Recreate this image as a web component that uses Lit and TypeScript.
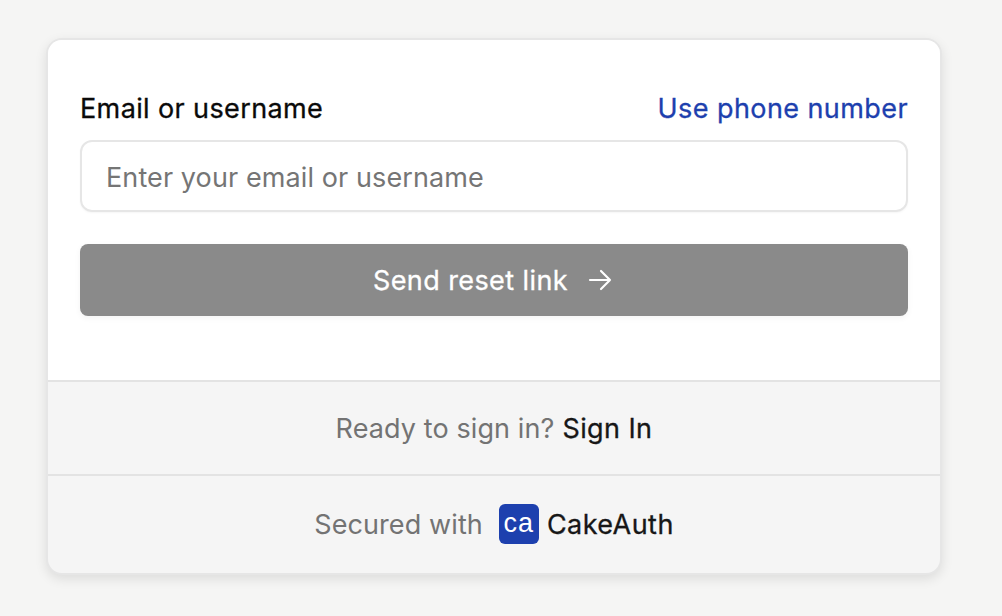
import { LitElement, html, css } from "lit";
import { customElement } from "lit/decorators.js";

@customElement("app-root")
export class AppRoot extends LitElement {
  static styles = css`
    :host {
      display: block;
      width: 1002px;
      height: 616px;
      box-sizing: border-box;
      background: #f5f5f4;
      padding: 38px 60px 0 46px;
      font-family: Inter, "Liberation Sans", sans-serif;
      font-size: 27px;
      letter-spacing: 0.1px;
      overflow: hidden;
    }
    .card {
      box-sizing: border-box;
      width: 896px;
      height: 537px;
      background: #f5f5f5;
      border: 2px solid #e6e6e6;
      border-radius: 16px;
      box-shadow: 0 4px 12px rgba(0, 0, 0, 0.1);
      display: flex;
      flex-direction: column;
      overflow: hidden;
    }
    .main {
      background: #fff;
      height: 340px;
      flex: none;
      box-sizing: border-box;
      padding: 50px 32px 0;
    }
    .head {
      display: flex;
      justify-content: space-between;
      align-items: center;
      height: 36px;
      padding-top: 2px;
      box-sizing: border-box;
      line-height: 36px;
      margin-bottom: 14px;
    }
    .label { color: #0a0a0a; letter-spacing: 0.38px; -webkit-text-stroke: 0.3px currentColor; }
    .alt { color: #1d40ae; letter-spacing: 0.42px; -webkit-text-stroke: 0.3px currentColor; }
    .input {
      box-sizing: border-box;
      height: 72px;
      border: 2px solid #e6e6e6;
      border-radius: 12px;
      padding: 2px 24px 0;
      display: flex;
      align-items: center;
      color: #757575;
      box-shadow: 0 1px 2px rgba(0, 0, 0, 0.04);
    }
    .btn {
      box-sizing: border-box;
      height: 72px;
      margin-top: 32px;
      padding-right: 3px;
      background: #8a8a8a;
      border-radius: 8px;
      color: #fff;
      letter-spacing: 0.42px;
      -webkit-text-stroke: 0.3px currentColor;
      display: flex;
      align-items: center;
      justify-content: center;
      gap: 20px;
      box-shadow: 0 2px 6px rgba(0, 0, 0, 0.05);
    }
    .btn svg { width: 24px; height: 24px; display: block; }
    .row {
      flex: none;
      box-sizing: border-box;
      border-top: 2px solid #e3e3e3;
      display: flex;
      align-items: center;
      justify-content: center;
      color: #737373;
    }
    .signin { height: 94px; gap: 8px; }
    .signin b { color: #171717; font-weight: 400; letter-spacing: 0.4px; -webkit-text-stroke: 0.3px currentColor; }
    .secured { height: 99px; }
    .logo {
      width: 40px;
      height: 40px;
      border-radius: 6px;
      background: #1d40ae;
      color: #fff;
      display: flex;
      align-items: center;
      justify-content: center;
      font-family: "Liberation Sans", Arial, sans-serif;
      font-size: 27px;
      letter-spacing: 1px;
      margin: -2px 8px 0 16px;
      box-sizing: border-box;
      line-height: 1;
    }
    .brand { color: #171717; letter-spacing: 0.45px; -webkit-text-stroke: 0.3px currentColor; }
  `;

  render() {
    return html`
      <div class="card">
        <div class="main">
          <div class="head">
            <span class="label">Email or username</span>
            <span class="alt">Use phone number</span>
          </div>
          <div class="input">Enter your email or username</div>
          <div class="btn">
            <span>Send reset link</span>
            <svg viewBox="0 0 24 24" fill="none" stroke="#fff" stroke-width="2.2" stroke-linecap="round" stroke-linejoin="round">
              <path d="M2 12h20M13 3l9 9-9 9" />
            </svg>
          </div>
        </div>
        <div class="row signin"><span>Ready to sign in?</span><b>Sign In</b></div>
        <div class="row secured">
          <span>Secured with</span>
          <span class="logo">ca</span>
          <span class="brand">CakeAuth</span>
        </div>
      </div>
    `;
  }
}
